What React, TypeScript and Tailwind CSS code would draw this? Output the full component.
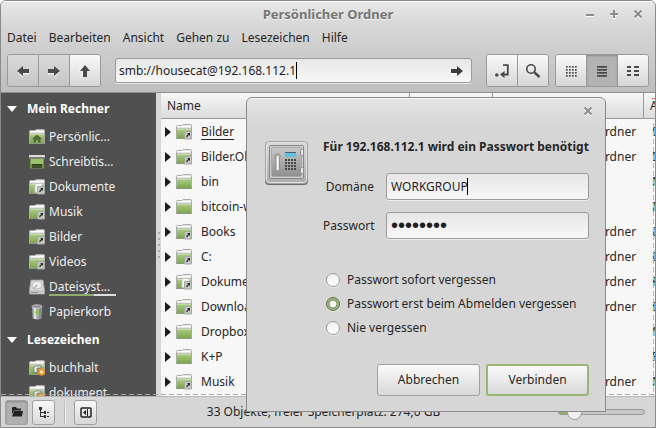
import React from "react";

type FolderKind = "plain" | "link" | "docs" | "home" | "desktop" | "net";

function FolderIcon({ kind }: { kind: FolderKind }) {
  if (kind === "desktop") {
    return (
      <svg width="16" height="16" viewBox="0 0 16 16" className="shrink-0" aria-hidden="true">
        <path d="M1 4h14v10.500H1z" fill="#6f9a45" />
        <path d="M2 5h12v5H2z" fill="#9cc46e" />
        <rect x="0" y="1" width="16" height="4" rx=".5" fill="#7d8278" />
        <rect x="0" y="1" width="16" height="2" rx=".5" fill="#d9dbd7" />
        <rect x="3" y="10" width="10" height="4" fill="#3e5426" />
        <rect x="3" y="10" width="10" height="1" fill="#2c3a1e" />
      </svg>
    );
  }
  return (
    <svg width="16" height="16" viewBox="0 0 16 16" className="shrink-0" aria-hidden="true">
      <defs>
        <linearGradient id="leaf" x1="0" y1="0" x2="0" y2="1">
          <stop offset="0" stopColor="#abcf80" />
          <stop offset="1" stopColor="#7da651" />
        </linearGradient>
      </defs>
      <path d="M.5 14V2.500Q.5 1.500 1.500 1.500h4.500l1-1h7.500q1 0 1 1V14q0 .5-.5.5H1Q.5 14.500.5 14z" fill="#e4e6e1" stroke="#a9aca6" />
      <path d="M1 2.500h14" stroke="#ffffff" />
      <path d="M1 4.500h14" stroke="#c2c5be" />
      <rect x="1" y="5" width="14" height="9" fill="url(#leaf)" />
      <path d="M1 5.500h14" stroke="#c3dba6" />
      <path d="M0 14.500h16" stroke="#8d9980" />
      {kind === "home" && (
        <path d="M8 5.500 3 10h1.500v3.500h2.500v-2.500h2v2.500h2.500V10H13z" fill="#4f6a38" />
      )}
      {kind === "docs" && <path d="M6 4.500h7v9H6z" fill="#f7f7f7" stroke="#c8c8c8" />}
      {(kind === "link" || kind === "docs") && (
        <g>
          <rect x="8" y="7" width="8" height="8.500" rx="1" fill="#a5a8a3" />
          <rect x="9" y="8" width="6" height="6.500" fill="#c4c7c1" />
          <path d="M11 9h3v3l-1-1-2 2.300-1-1L12.200 10z" fill="#2a3026" />
        </g>
      )}
      {kind === "net" && (
        <g>
          <path d="M5 12.500V8q0-2 2-2h5v2H8v4.500z" fill="#f4f4f4" stroke="#4e4e4e" strokeWidth=".6" />
          <circle cx="12.500" cy="12" r="3.500" fill="#eda23f" stroke="#c97e1e" strokeWidth=".6" />
          <circle cx="12.500" cy="12" r="1.400" fill="#fff3dc" />
        </g>
      )}
    </svg>
  );
}

function DriveIcon() {
  return (
    <svg width="16" height="16" viewBox="0 0 16 16" className="shrink-0" aria-hidden="true">
      <path d="M2 1h12l1.500 10v4H.5v-4z" fill="#d8d8d8" stroke="#a2a2a2" strokeWidth=".8" />
      <ellipse cx="8" cy="6" rx="5" ry="4" fill="#ececec" stroke="#b0b0b0" strokeWidth=".8" />
      <path d="M8 6 4.500 10" stroke="#8d8d8d" />
      <rect x="1" y="11" width="14" height="4" fill="#c6c6c6" />
      <path d="M2 13.500h7" stroke="#8a8a8a" />
    </svg>
  );
}

function TrashIcon() {
  return (
    <svg width="16" height="16" viewBox="0 0 16 16" className="shrink-0" aria-hidden="true">
      <path d="M3 2.500h10l-.7 12q-4.300 2-8.600 0z" fill="#a9aaa9" />
      <path d="M5 3h2l.3 12H5.200z" fill="#e2e2e2" />
      <path d="M10.500 3H12l-.4 11.500h-1.400z" fill="#7f807f" />
      <ellipse cx="8" cy="2.500" rx="5" ry="1.700" fill="#8b8c90" stroke="#d8d8d8" strokeWidth=".8" />
      <path d="M8 5.500 10 8.500 8 11.500 6 8.500z" fill="#86d03c" />
    </svg>
  );
}

function SafeIcon() {
  return (
    <svg width="46" height="46" viewBox="0 0 46 46" className="shrink-0" aria-hidden="true">
      <defs>
        <linearGradient id="safeBody" x1="0" y1="0" x2="0" y2="1">
          <stop offset="0" stopColor="#d9d9d9" />
          <stop offset="1" stopColor="#acacac" />
        </linearGradient>
        <linearGradient id="safeDoor" x1="0" y1="0" x2="0" y2="1">
          <stop offset="0" stopColor="#c8c8c8" />
          <stop offset="1" stopColor="#8f8f8f" />
        </linearGradient>
      </defs>
      <rect x="1" y="2" width="43" height="43" rx="4" fill="#6c6c6c" />
      <rect x="1.500" y="1.500" width="42" height="42" rx="4" fill="url(#safeBody)" stroke="#a2a2a2" />
      <rect x="2.500" y="2.500" width="40" height="40" rx="3" fill="none" stroke="#e4e4e4" />
      <rect x="5.500" y="5.500" width="34" height="33" rx="1" fill="#cfcfcf" stroke="#858585" />
      <rect x="7.500" y="7.500" width="30" height="29" rx="1" fill="url(#safeDoor)" stroke="#a8a8a8" />
      <rect x="36.500" y="9.500" width="3" height="6" rx="1" fill="#e8e8e8" stroke="#888888" />
      <rect x="36.500" y="27.500" width="3" height="6" rx="1" fill="#e8e8e8" stroke="#888888" />
      <circle cx="13.500" cy="16.500" r="2.800" fill="#bdbdbd" stroke="#8c8c8c" strokeWidth=".8" />
      <rect x="12" y="15" width="3.500" height="16" rx="1.700" fill="#e2e2e2" stroke="#7c7c7c" strokeWidth=".7" />
      <path d="M13.500 17v12" stroke="#ffffff" />
      <rect x="21" y="13" width="11" height="4" fill="#62c1dc" />
      <path d="M21 12.500h11" stroke="#46616a" />
      {[0, 1, 2, 3].map((r) =>
        [0, 1, 2, 3].map((c) => (
          <rect key={`${r}-${c}`} x={21 + c * 3} y={19 + r * 3} width="2" height="2" fill="#484848" />
        ))
      )}
    </svg>
  );
}

function Arrow({ className }: { className: string }) {
  return (
    <svg width="14" height="14" viewBox="0 0 14 14" className={className} aria-hidden="true">
      <path d="M1 8 7 3v3.500h6v4H7V14z" fill="#ffffff" opacity=".7" />
      <path d="M1 7 7 2v3h6v4H7v3z" fill="currentColor" />
    </svg>
  );
}

function ToolButton({ label, tone, children }: { label: string; tone: "flat" | "raised" | "pressed"; children: React.ReactNode }) {
  const tones = {
    flat: "bg-linear-to-b from-[#dadada] to-[#c6c6c6]",
    raised: "bg-linear-to-b from-[#fafafa] to-[#d6d6d6]",
    pressed: "bg-[#b3b3b3] shadow-[inset_0_1px_2px_#8a8a8a]",
  };
  return (
    <button type="button" aria-label={label} className={`flex h-[31px] w-[31px] items-center justify-center border-r border-[#9a9a9a] text-[#4a4a4a] last:w-[30px] last:border-r-0 ${tones[tone]}`}>
      {children}
    </button>
  );
}

function ToolGroup({ children }: { children: React.ReactNode }) {
  return <div className="flex shrink-0 overflow-hidden rounded-[3px] border border-[#9a9a9a]">{children}</div>;
}

function CaretField({ text, children }: { text: string; children: React.ReactNode }) {
  return (
    <div className="relative min-w-0 flex-1">
      {children}
      <span aria-hidden="true" className="pointer-events-none absolute inset-y-0 left-1 flex items-center">
        <span className="invisible whitespace-pre">{text}</span>
        <span className="h-[17px] w-px bg-black" />
      </span>
    </div>
  );
}

const field =
  "w-full rounded-[3px] border border-[#9b9b9b] bg-linear-to-b from-[#e6e6e6] to-[#f8f8f8] text-[#1f1f1f] shadow-[0_1px_0_#ececec] outline-none";

const places: { name: string; icon: FolderKind | "drive" | "trash" }[] = [
  { name: "Persönlic...", icon: "home" },
  { name: "Schreibtis...", icon: "desktop" },
  { name: "Dokumente", icon: "docs" },
  { name: "Musik", icon: "link" },
  { name: "Bilder", icon: "link" },
  { name: "Videos", icon: "link" },
  { name: "Dateisyst...", icon: "drive" },
  { name: "Papierkorb", icon: "trash" },
];
const bookmarks: typeof places = [
  { name: "buchhalt", icon: "net" },
  { name: "dokument", icon: "net" },
];

function SideSection({ title, items }: { title: string; items: typeof places }) {
  return (
    <section>
      <h2 className="flex h-[31px] items-center gap-[10px] pl-[6px] font-bold text-white">
        <svg width="10" height="6" viewBox="0 0 10 6" aria-hidden="true">
          <path d="M0 0h10L5 6z" fill="#ffffff" />
        </svg>
        {title}
      </h2>
      <ul>
        {items.map((p) => (
          <li key={p.name} className="flex h-[25px] items-center gap-1 pl-7 text-[#eeeeee]">
            {p.icon === "drive" ? <DriveIcon /> : p.icon === "trash" ? <TrashIcon /> : <FolderIcon kind={p.icon} />}
            <span className="relative">
              {p.name}
              {p.icon === "drive" && (
                <span className="absolute top-[15px] left-0 flex h-[2px] w-[67px] bg-[#dedede]">
                  <span className="w-2/3 bg-[#8fae6b]" />
                </span>
              )}
            </span>
          </li>
        ))}
      </ul>
    </section>
  );
}

const files: { name: string; kind: FolderKind; date: string }[] = [
  { name: "Bilder", kind: "link", date: "Do" },
  { name: "Bilder.Old", kind: "link", date: "Do" },
  { name: "bin", kind: "plain", date: "Mo" },
  { name: "bitcoin-wallet", kind: "plain", date: "Mi" },
  { name: "Books", kind: "link", date: "Do" },
  { name: "C:", kind: "link", date: "Do" },
  { name: "Dokumente", kind: "docs", date: "Fr" },
  { name: "Downloads", kind: "link", date: "Do" },
  { name: "Dropbox", kind: "plain", date: "Mi" },
  { name: "K+P", kind: "plain", date: "Fr" },
  { name: "Musik", kind: "link", date: "Mo" },
];

function FileTable() {
  const th = "border-r border-b border-[#9a9a9a] pl-[6px] text-left font-normal";
  return (
    <div className="relative min-w-0 flex-1 overflow-hidden bg-[#f7f7f7]">
      <table className="w-[600px] table-fixed border-separate border-spacing-0 whitespace-nowrap">
        <colgroup>
          <col className="w-[249px]" />
          <col className="w-[83px]" />
          <col className="w-[151px]" />
          <col />
        </colgroup>
        <thead>
          <tr className="h-[26px] bg-linear-to-b from-[#f8f8f8] to-[#dadada]">
            <th className={th}>Name</th>
            <th className={th}>Größe</th>
            <th className={th}>Typ</th>
            <th className={th}>Änderungsdatum</th>
          </tr>
        </thead>
        <tbody>
          {files.map((f, i) => (
            <tr key={f.name} className="h-[25px]">
              <td className="p-0">
                <div className="flex items-center pl-1">
                  <svg width="6" height="10" viewBox="0 0 6 10" aria-hidden="true">
                    <path d="M0 0v10l6-5z" fill="#1c1c1c" />
                  </svg>
                  <span className="pr-[9px] pl-[5px]">
                    <FolderIcon kind={f.kind} />
                  </span>
                  <span className={i === 0 ? "underline underline-offset-3" : ""}>{f.name}</span>
                </div>
              </td>
              <td className="p-0 pl-1">Objekte</td>
              <td className="p-0 pl-1">{f.kind === "plain" ? "Ordner" : "Verknüpfung mit Ordner"}</td>
              <td className="p-0 pl-2">{f.date}</td>
            </tr>
          ))}
        </tbody>
      </table>
      <div className="absolute top-[30px] right-px bottom-0 w-px bg-[repeating-linear-gradient(to_bottom,#b8b8b8_0_5px,transparent_5px_8px)]" />
    </div>
  );
}

function StatusButton({ label, pressed, children }: { label: string; pressed?: boolean; children: React.ReactNode }) {
  return (
    <button
      type="button"
      aria-label={label}
      className={`flex h-[25px] w-[23px] items-center justify-center rounded-[3px] border border-[#a0a0a0] ${
        pressed ? "bg-[#b0b0b0] shadow-[inset_0_1px_2px_#888888]" : "bg-linear-to-b from-[#f8f8f8] to-[#d8d8d8]"
      }`}
    >
      {children}
    </button>
  );
}

function StatusBar() {
  return (
    <footer className="flex h-[31px] shrink-0 items-center border-t border-[#b4b4b4] bg-[#d6d6d6] pl-1">
      <div className="flex items-center gap-1">
        <StatusButton label="Orte" pressed>
          <svg width="12" height="12" viewBox="0 0 12 12" aria-hidden="true">
            <path d="M1 2q0-1 1-1h3l1 1.500h4v2H3L1 8z" fill="#222" />
            <path d="M3 5h9l-1 5q-.2.500-.7.500H1z" fill="#222" />
          </svg>
        </StatusButton>
        <StatusButton label="Baum">
          <svg width="12" height="12" viewBox="0 0 12 12" aria-hidden="true" fill="#333">
            <path d="M1 1h3v3H3v2h3v1H3v3h3v1H2V4H1zM6 5h2v3H6zM6 9h2v3H6zM9 6h2v1H9zM9 10h2v1H9z" />
          </svg>
        </StatusButton>
      </div>
      <div className="mx-[9px] h-[23px] w-px bg-[#bcbcbc] shadow-[1px_0_0_#ececec]" />
      <StatusButton label="Seitenleiste">
        <svg width="12" height="12" viewBox="0 0 12 12" aria-hidden="true">
          <rect x="1" y="2" width="10" height="9" rx="1" fill="none" stroke="#222" strokeWidth="1.500" />
          <path d="M6 4v5L3 6.500zM7 3h1v7H7z" fill="#222" />
        </svg>
      </StatusButton>
      <p className="flex-1 pr-2 text-center whitespace-nowrap">33 Objekte, freier Speicherplatz: 274,0 GB</p>
      <input
        type="range"
        aria-label="Vergrößerung"
        min={0}
        max={100}
        defaultValue={12}
        className="mr-[10px] h-4 w-[87px] appearance-none bg-transparent [&::-webkit-slider-runnable-track]:h-[6px] [&::-webkit-slider-runnable-track]:rounded-full [&::-webkit-slider-runnable-track]:border [&::-webkit-slider-runnable-track]:border-[#999999] [&::-webkit-slider-runnable-track]:bg-linear-to-r [&::-webkit-slider-runnable-track]:from-[#8fae6b] [&::-webkit-slider-runnable-track]:from-15% [&::-webkit-slider-runnable-track]:to-[#c6c6c6] [&::-webkit-slider-runnable-track]:to-15% [&::-webkit-slider-thumb]:-mt-[5px] [&::-webkit-slider-thumb]:size-[15px] [&::-webkit-slider-thumb]:appearance-none [&::-webkit-slider-thumb]:rounded-full [&::-webkit-slider-thumb]:border [&::-webkit-slider-thumb]:border-[#999999] [&::-webkit-slider-thumb]:bg-[#f0f0f0]"
      />
    </footer>
  );
}

function PasswordDialog() {
  const radio =
    "size-[14px] shrink-0 appearance-none rounded-full border border-[#9c9c9c] bg-linear-to-b from-[#f0f0f0] to-white shadow-[0_1px_0_#ebebeb] checked:border-[#5f6e50] checked:bg-[radial-gradient(circle,#f8f8f8_3px,#6f8755_4px,#9bbf78_5px)]";
  const button = "h-8 w-[103px] rounded-[3px] bg-linear-to-b from-[#fafafa] to-[#d8d8d8]";
  return (
    <div
      role="dialog"
      aria-label="Passwort benötigt"
      className="absolute top-[96px] left-[245px] w-[360px] rounded-t-md border border-[#8a8a8a] bg-[#d6d6d6] bg-linear-to-b from-[#e5e5e5] to-[#d6d6d6] to-[28px] pr-4 pb-[15px] pl-[17px] shadow-[inset_0_1px_0_#f6f6f6]"
    >
      <div className="-mr-1 flex h-[26px] items-center justify-end">
        <button type="button" aria-label="Schließen" className="text-[#8c8c8c]">
          <svg width="10" height="10" viewBox="0 0 10 10" aria-hidden="true">
            <path d="M1.500 2.500l7 7M8.500 2.500l-7 7" stroke="#ffffff" strokeWidth="2" />
            <path d="M1.500 1.500l7 7M8.500 1.500l-7 7" stroke="currentColor" strokeWidth="2" />
          </svg>
        </button>
      </div>
      <form className="flex flex-col pt-4" onSubmit={(e) => e.preventDefault()}>
        <div className="flex gap-[13px]">
          <SafeIcon />
          <div className="min-w-0 flex-1">
            <h1 className="leading-[14px] font-bold whitespace-nowrap">Für 192.168.112.1 wird ein Passwort benötigt</h1>
            <div className="mt-[19px] flex flex-col gap-3">
              <div className="flex items-center gap-3">
                <label htmlFor="domain" className="w-[51px] text-right">Domäne</label>
                <CaretField text="WORKGROUP">
                  <input id="domain" defaultValue="WORKGROUP" className={`${field} block h-[27px] px-1`} />
                </CaretField>
              </div>
              <div className="flex items-center gap-3">
                <label htmlFor="password" className="w-[51px] text-right">Passwort</label>
                <div className="min-w-0 flex-1">
                  <input
                    id="password"
                    type="password"
                    defaultValue="geheim12"
                    className={`${field} block h-[27px] px-1 font-['Liberation_Sans',sans-serif] text-[20px]`}
                  />
                </div>
              </div>
            </div>
            <div className="mt-[29px] flex flex-col pl-[3px]">
              {["Passwort sofort vergessen", "Passwort erst beim Abmelden vergessen", "Nie vergessen"].map((t, i) => (
                <label key={t} className="flex h-6 items-center gap-[7px] whitespace-nowrap">
                  <input type="radio" name="remember" defaultChecked={i === 1} className={radio} />
                  {t}
                </label>
              ))}
            </div>
          </div>
        </div>
        <div className="mt-6 flex justify-end gap-[6px]">
          <button type="button" className={`${button} border border-[#a0a0a0]`}>Abbrechen</button>
          <button type="submit" className={`${button} border-2 border-[#98b777]`}>Verbinden</button>
        </div>
      </form>
    </div>
  );
}

export default function App() {
  return (
    <div className="relative flex h-screen flex-col overflow-hidden rounded-t-md border border-[#8a8a8a] bg-[#d6d6d6] font-['Noto_Sans',sans-serif] text-xs leading-4 text-[#262626]">
      <header className="shrink-0 border-b border-[#8f8f8f] bg-linear-to-b from-[#e8e8e8] via-[#d6d6d6] via-30% to-[#bebebe] shadow-[inset_0_1px_0_#f8f8f8]">
        <div className="grid h-[26px] grid-cols-[1fr_auto_1fr] items-center">
          <h1 className="col-start-2 text-[13px] font-bold text-[#757575] [text-shadow:0_1px_0_#f4f4f4]">Persönlicher Ordner</h1>
          <div className="flex justify-end gap-[14px] pr-3 text-[#8c8c8c]">
            {[
              ["Minimieren", "M1 6h8"],
              ["Maximieren", "M1 5h8M5 1v8"],
              ["Schließen", "M1.500 1.500l7 7M8.500 1.500l-7 7"],
            ].map(([label, d]) => (
              <button key={label} type="button" aria-label={label}>
                <svg width="10" height="10" viewBox="0 0 10 10" className="overflow-visible" aria-hidden="true">
                  <path d={d} transform="translate(0 1)" stroke="#ffffff" strokeWidth="2" />
                  <path d={d} stroke="currentColor" strokeWidth="2" />
                </svg>
              </button>
            ))}
          </div>
        </div>
        <nav className="flex h-[22px] items-center gap-3 pl-[6px]">
          {["Datei", "Bearbeiten", "Ansicht", "Gehen zu", "Lesezeichen", "Hilfe"].map((m) => (
            <button key={m} type="button">{m}</button>
          ))}
        </nav>
        <div className="flex h-[43px] items-center px-[6px]">
          <ToolGroup>
            <ToolButton label="Zurück" tone="flat"><Arrow className="" /></ToolButton>
            <ToolButton label="Vor" tone="flat"><Arrow className="-scale-x-100" /></ToolButton>
            <ToolButton label="Aufwärts" tone="raised"><Arrow className="rotate-90" /></ToolButton>
          </ToolGroup>
          <div className="mx-[14px] flex min-w-0 flex-1 items-center">
            <CaretField text="smb://housecat@192.168.112.1">
              <input aria-label="Adresse" defaultValue="smb://housecat@192.168.112.1" className={`${field} block h-[25px] px-[3px]`} />
              <button type="button" aria-label="Öffnen" className="absolute inset-y-0 right-2 text-[#3c3c3c]">
                <Arrow className="-scale-x-100" />
              </button>
            </CaretField>
          </div>
          <div className="flex gap-[6px]">
            <ToolGroup>
              <ToolButton label="Adresse umschalten" tone="raised">
                <svg width="16" height="16" viewBox="0 0 16 16" aria-hidden="true">
                  <circle cx="2.800" cy="12" r="1.800" fill="currentColor" />
                  <path d="M9 2.200h4.800v9.300H9.500" fill="none" stroke="currentColor" strokeWidth="1.800" />
                  <path d="M6 11.500 10.500 8v7z" fill="currentColor" />
                </svg>
              </ToolButton>
              <ToolButton label="Suchen" tone="raised">
                <svg width="16" height="16" viewBox="0 0 16 16" fill="none" stroke="currentColor" aria-hidden="true">
                  <circle cx="6" cy="6" r="4.200" strokeWidth="1.600" />
                  <path d="M9.500 9.500 14.500 14" strokeWidth="2.400" />
                </svg>
              </ToolButton>
            </ToolGroup>
            <ToolGroup>
              <ToolButton label="Symbole" tone="raised">
                <svg width="12" height="12" viewBox="0 0 12 12" fill="currentColor" aria-hidden="true">
                  {[1, 4, 7, 10].map((y) => [1, 4, 7, 10].map((x) => <rect key={`${x}-${y}`} x={x} y={y} width="1.700" height="1.700" />))}
                </svg>
              </ToolButton>
              <ToolButton label="Liste" tone="pressed">
                <svg width="12" height="12" viewBox="0 0 12 12" fill="currentColor" aria-hidden="true">
                  <path d="M1 1h10v1.700H1zM1 4h10v1.700H1zM1 7h10v1.700H1zM1 10h10v1.700H1z" />
                </svg>
              </ToolButton>
              <ToolButton label="Kompakt" tone="raised">
                <svg width="12" height="12" viewBox="0 0 12 12" fill="currentColor" aria-hidden="true">
                  <path d="M0 1h4v2H0zM7 1h5v2H7zM0 5h4v2H0zM7 5h5v2H7zM0 9h4v2H0zM7 9h5v2H7z" />
                </svg>
              </ToolButton>
            </ToolGroup>
          </div>
        </div>
      </header>
      <main className="relative flex min-h-0 flex-1 overflow-hidden">
        <aside className="w-[155px] shrink-0 overflow-hidden bg-[#505050]">
          <SideSection title="Mein Rechner" items={places} />
          <SideSection title="Lesezeichen" items={bookmarks} />
        </aside>
        <div className="flex w-[5px] shrink-0 flex-col items-center justify-center gap-[4px]">
          {[0, 1, 2, 3, 4].map((n) => (
            <span key={n} className="size-[2px] rounded-full bg-[#999999]" />
          ))}
        </div>
        <FileTable />
        <div className="absolute inset-x-0 bottom-px h-px bg-[repeating-linear-gradient(to_right,#a8a8a8_0_5px,transparent_5px_8px)]" />
      </main>
      <StatusBar />
      <PasswordDialog />
    </div>
  );
}
